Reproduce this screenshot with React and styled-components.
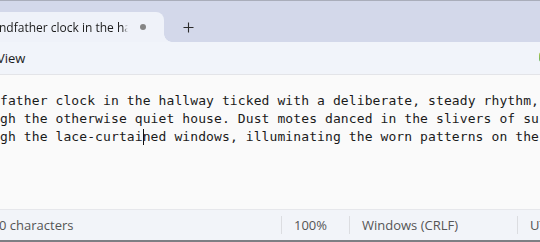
import React from "react"
import styled, { createGlobalStyle } from "styled-components"

const GlobalStyle = createGlobalStyle`
  html, body {
    margin: 0;
    padding: 0;
    background: #fafafa;
  }
  * { box-sizing: border-box; }
`

const uiFont = `"Segoe UI", "Open Sans", "Noto Sans", sans-serif`

const Window = styled.div`
  width: 540px;
  height: 242px;
  display: flex;
  flex-direction: column;
  overflow: hidden;
  font-family: ${uiFont};
  background: #fafafa;
`

const TitleBar = styled.div`
  height: 42px;
  flex: none;
  background: #d3d8ea;
  border-top: 1px solid #a9adba;
  display: flex;
  align-items: flex-end;
`

const Tab = styled.div`
  position: relative;
  width: 164px;
  height: 30px;
  background: #eff2f9;
  border-radius: 0 8px 0 0;
  display: flex;
  align-items: center;
  padding-right: 16px;
  &::after {
    content: "";
    position: absolute;
    right: -8px;
    bottom: 0;
    width: 8px;
    height: 8px;
    background: radial-gradient(circle at 100% 0, transparent 7.5px, #eff2f9 8px);
  }
`

const TabTitle = styled.span`
  flex: 1;
  overflow: hidden;
  white-space: nowrap;
  font-size: 12px;
  color: #1b1b1b;
  margin-left: -1px;
  -webkit-mask-image: linear-gradient(to right, #000 124px, transparent 129px);
  mask-image: linear-gradient(to right, #000 124px, transparent 129px);
`

const Dot = styled.span`
  width: 6px;
  height: 6px;
  border-radius: 50%;
  background: #858585;
  flex: none;
  margin-right: 2px;
`

const NewTab = styled.div`
  width: 48px;
  height: 30px;
  display: flex;
  align-items: center;
  justify-content: center;
  color: #333;
`

const MenuBar = styled.div`
  height: 33px;
  flex: none;
  background: #f1f4fa;
  border-bottom: 1px solid #e3e4e8;
  display: flex;
  align-items: center;
  justify-content: space-between;
`

const MenuItem = styled.span`
  font-size: 13px;
  color: #1b1b1b;
  margin-left: -3px;
`

const Copilot = styled.span`
  width: 8px;
  height: 10px;
  border-radius: 3px;
  margin-right: -7px;
  margin-top: -2px;
  background: linear-gradient(180deg, #b6c84a, #5fae61);
`

const Editor = styled.div`
  flex: 1;
  background: #fafafa;
  padding-top: 17px;
  overflow: hidden;
  font-family: Consolas, "DejaVu Sans Mono", monospace;
  font-size: 13px;
  letter-spacing: 0.1px;
  line-height: 18px;
  color: #1a1a1a;
  white-space: pre;
`

const Line = styled.div``

const Caret = styled.span`
  display: inline-block;
  width: 1px;
  height: 16px;
  margin-right: -1px;
  background: #111;
  vertical-align: -4px;
`

const StatusBar = styled.div`
  height: 33px;
  flex: none;
  background: #f2f4f9;
  border-top: 1px solid #e6e7eb;
  border-bottom: 2px solid #7d7f84;
  display: flex;
  align-items: center;
  font-size: 13px;
  color: #555;
`

const Cell = styled.div`
  width: ${p => p.$w}px;
  flex: none;
  display: flex;
  align-items: center;
  height: 18px;
  white-space: nowrap;
  padding-left: ${p => (p.$first ? 0 : 12)}px;
  margin-left: ${p => p.$offset || 0}px;
  border-left: ${p => (p.$first ? "none" : "1px solid #dcdde1")};
`

export default function App() {
  return (
    <>
      <GlobalStyle />
      <Window>
        <TitleBar>
          <Tab>
            <TabTitle>ndfather clock in the hallway ticked</TabTitle>
            <Dot />
          </Tab>
          <NewTab>
            <svg width="11" height="11" viewBox="0 0 11 11">
              <path d="M5.5 0.5v10M0.5 5.5h10" stroke="#2b2b2b" strokeWidth="1.1" fill="none" />
            </svg>
          </NewTab>
        </TitleBar>
        <MenuBar>
          <MenuItem>View</MenuItem>
          <Copilot />
        </MenuBar>
        <Editor>
          <Line>father clock in the hallway ticked with a deliberate, steady rhythm,</Line>
          <Line>gh the otherwise quiet house. Dust motes danced in the slivers of su</Line>
          <Line>gh the lace-curtai<Caret />ned windows, illuminating the worn patterns on the</Line>
        </Editor>
        <StatusBar>
          <Cell $first $w={282} $offset={-1}>0 characters</Cell>
          <Cell $w={68}>100%</Cell>
          <Cell $w={168}>Windows (CRLF)</Cell>
          <Cell $w={60}>UT</Cell>
        </StatusBar>
      </Window>
    </>
  )
}
